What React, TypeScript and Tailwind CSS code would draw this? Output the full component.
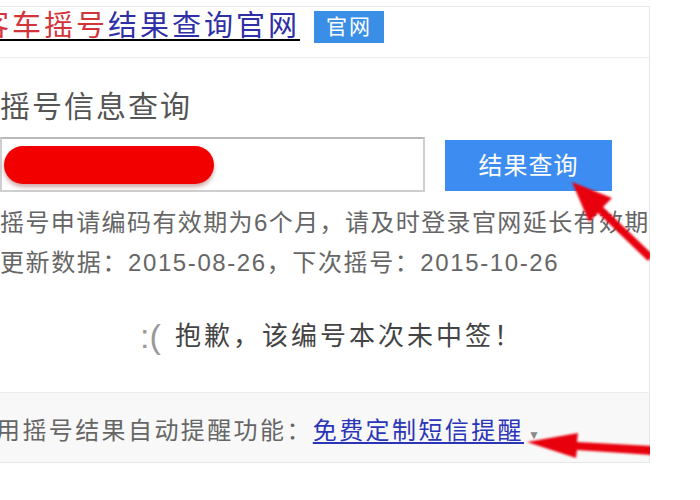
import React from "react";

// 摇号结果查询 — 截图式还原：卡片右缘与底部被裁切，外加两个红色标注箭头
export default function App() {
  return (
    <div className="relative h-[500px] w-[700px] bg-white font-['Liberation_Sans','Noto_Sans_CJK_SC',sans-serif]">
      <div className="relative w-[650px] overflow-hidden pt-[6px]">
        <div className="border-b border-r border-t border-[#e6e6e6]">
          <Header />
          <QueryBody />
          <Footer />
        </div>
        <Arrows />
      </div>
    </div>
  );
}

function Header() {
  return (
    <div className="flex h-[51px] items-start gap-[14px] border-b border-[#ececec] pt-[1px]">
      <a className="ml-[-20px] whitespace-nowrap text-[29px] leading-[36px] tracking-[3px] underline decoration-[2px] underline-offset-[3px]">
        <span className="text-[#d2343a] decoration-[#d2343a]">客车摇号</span>
        <span className="text-[#2f2fa8] decoration-[#2f2fa8]">结果查询官网</span>
      </a>
      <span className="mt-[3px] h-[32px] bg-[#3a8ee6] px-[12px] text-[21px] leading-[32px] tracking-[2px] text-white">
        官网
      </span>
    </div>
  );
}

function QueryBody() {
  return (
    <div className="h-[334px] pt-[31px]">
      <p className="text-[30px] leading-[36px] tracking-[2px] text-[#555]">摇号信息查询</p>
      <div className="mt-[12px] flex items-start">
        <div className="flex h-[55px] w-[425px] items-center border-2 border-[#cfcfcf] border-t-[#b9b9b9] bg-white">
          {/* 涂抹遮挡的编号 */}
          <div className="ml-[2px] h-[38px] w-[210px] rounded-full bg-[#f20000] blur-[0.6px] shadow-[0_3px_4px_rgba(120,0,0,0.35)]" />
        </div>
        <button className="ml-[20px] mt-[3px] h-[51px] w-[167px] bg-[#3d8cf2] text-[24px] tracking-[1px] text-white">
          结果查询
        </button>
      </div>
      <p className="mt-[11px] whitespace-nowrap text-[24px] leading-[40px] tracking-[1.4px] text-[#666]">
        摇号申请编码有效期为6个月，请及时登录官网延长有效期
      </p>
      <p className="whitespace-nowrap text-[24px] leading-[40px] tracking-[1.6px] text-[#666]">
        更新数据：2015-08-26，下次摇号：2015-10-26
      </p>
      <div className="mt-[33px] flex items-center justify-center pl-[14px]">
        <span className="mr-[14px] text-[34px] leading-[40px] text-[#999]">:(</span>
        <span className="text-[26px] leading-[40px] tracking-[3px] text-[#444]">抱歉，该编号本次未中签！</span>
      </div>
    </div>
  );
}

function Footer() {
  return (
    <div className="flex h-[70px] items-center border-t border-[#ececec] bg-[#f8f8f8] pt-[10px]">
      <p className="ml-[-4px] whitespace-nowrap text-[24px] leading-[32px] tracking-[2.4px] text-[#666]">
        用摇号结果自动提醒功能：
        <a className="text-[#2b35b8] underline decoration-[2px] underline-offset-[3px]">免费定制短信提醒</a>
        <span className="ml-[4px] text-[12px] text-[#888]">▼</span>
      </p>
    </div>
  );
}

function Arrows() {
  return (
    <svg className="pointer-events-none absolute left-0 top-0" width="650" height="470" viewBox="0 0 650 470">
      <defs>
        <filter id="soft" x="-10%" y="-10%" width="120%" height="120%">
          <feGaussianBlur stdDeviation="0.9" />
        </filter>
      </defs>
      <g fill="#e8000e" filter="url(#soft)">
        <polygon points="572,182 612,198 603,207 653,255 648,261 598,213 589,222" />
        <polygon points="527,442 578,433 577,442 652,446 652,455 577,450 576,458" />
      </g>
    </svg>
  );
}
